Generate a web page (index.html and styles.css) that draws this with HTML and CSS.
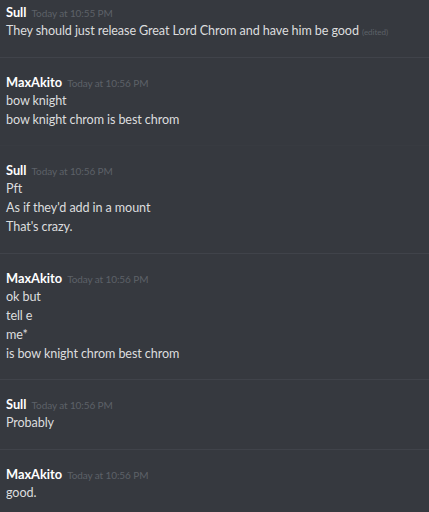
FILE: index.html
```html
<!DOCTYPE html>
<html>
<head>
<meta charset="utf-8">
<link rel="stylesheet" href="styles.css">
</head>
<body>
<div class="chat">
  <div class="group first">
    <div class="head"><span class="name">Sull</span><span class="time">Today at 10:55 PM</span></div>
    <div class="line">They should just release Great Lord Chrom and have him be good <span class="edited">(edited)</span></div>
  </div>
  <div class="group">
    <div class="head"><span class="name">MaxAkito</span><span class="time">Today at 10:56 PM</span></div>
    <div class="line">bow knight</div>
    <div class="line">bow knight chrom is best chrom</div>
  </div>
  <div class="group nodiv">
    <div class="head"><span class="name">Sull</span><span class="time">Today at 10:56 PM</span></div>
    <div class="line">Pft</div>
    <div class="line">As if they'd add in a mount</div>
    <div class="line">That's crazy.</div>
  </div>
  <div class="group">
    <div class="head"><span class="name">MaxAkito</span><span class="time">Today at 10:56 PM</span></div>
    <div class="line">ok but</div>
    <div class="line">tell e</div>
    <div class="line">me*</div>
    <div class="line">is bow knight chrom best chrom</div>
  </div>
  <div class="group">
    <div class="head"><span class="name">Sull</span><span class="time">Today at 10:56 PM</span></div>
    <div class="line">Probably</div>
  </div>
  <div class="group">
    <div class="head"><span class="name">MaxAkito</span><span class="time">Today at 10:56 PM</span></div>
    <div class="line">good.</div>
  </div>
</div>
</body>
</html>
```
FILE: styles.css
```css
html, body {
  margin: 0;
  padding: 0;
  background: #36393f;
}
.chat {
  font-family: "Lato", "Open Sans", sans-serif;
  color: #dcddde;
  overflow: hidden;
  height: 512px;
}
.group {
  border-top: 1px solid #40434a;
  padding: 16px 0 16.5px 6px;
}
.group.first {
  border-top: none;
  padding-top: 4px;
  padding-bottom: 14.5px;
}
.group.nodiv {
  border-top-color: #383b41;
}
.head {
  display: flex;
  align-items: baseline;
  gap: 5px;
  height: 17px;
  line-height: 17px;
  white-space: nowrap;
}
.name {
  color: #ffffff;
  font-weight: 700;
  font-size: 12.8px;
}
.time {
  color: #5d6168;
  font-size: 10px;
  letter-spacing: -0.1px;
}
.line {
  font-size: 12.6px;
  letter-spacing: -0.1px;
  line-height: 19px;
  white-space: nowrap;
}
.edited {
  color: #5d6168;
  font-size: 8px;
  letter-spacing: 0;
}
```
